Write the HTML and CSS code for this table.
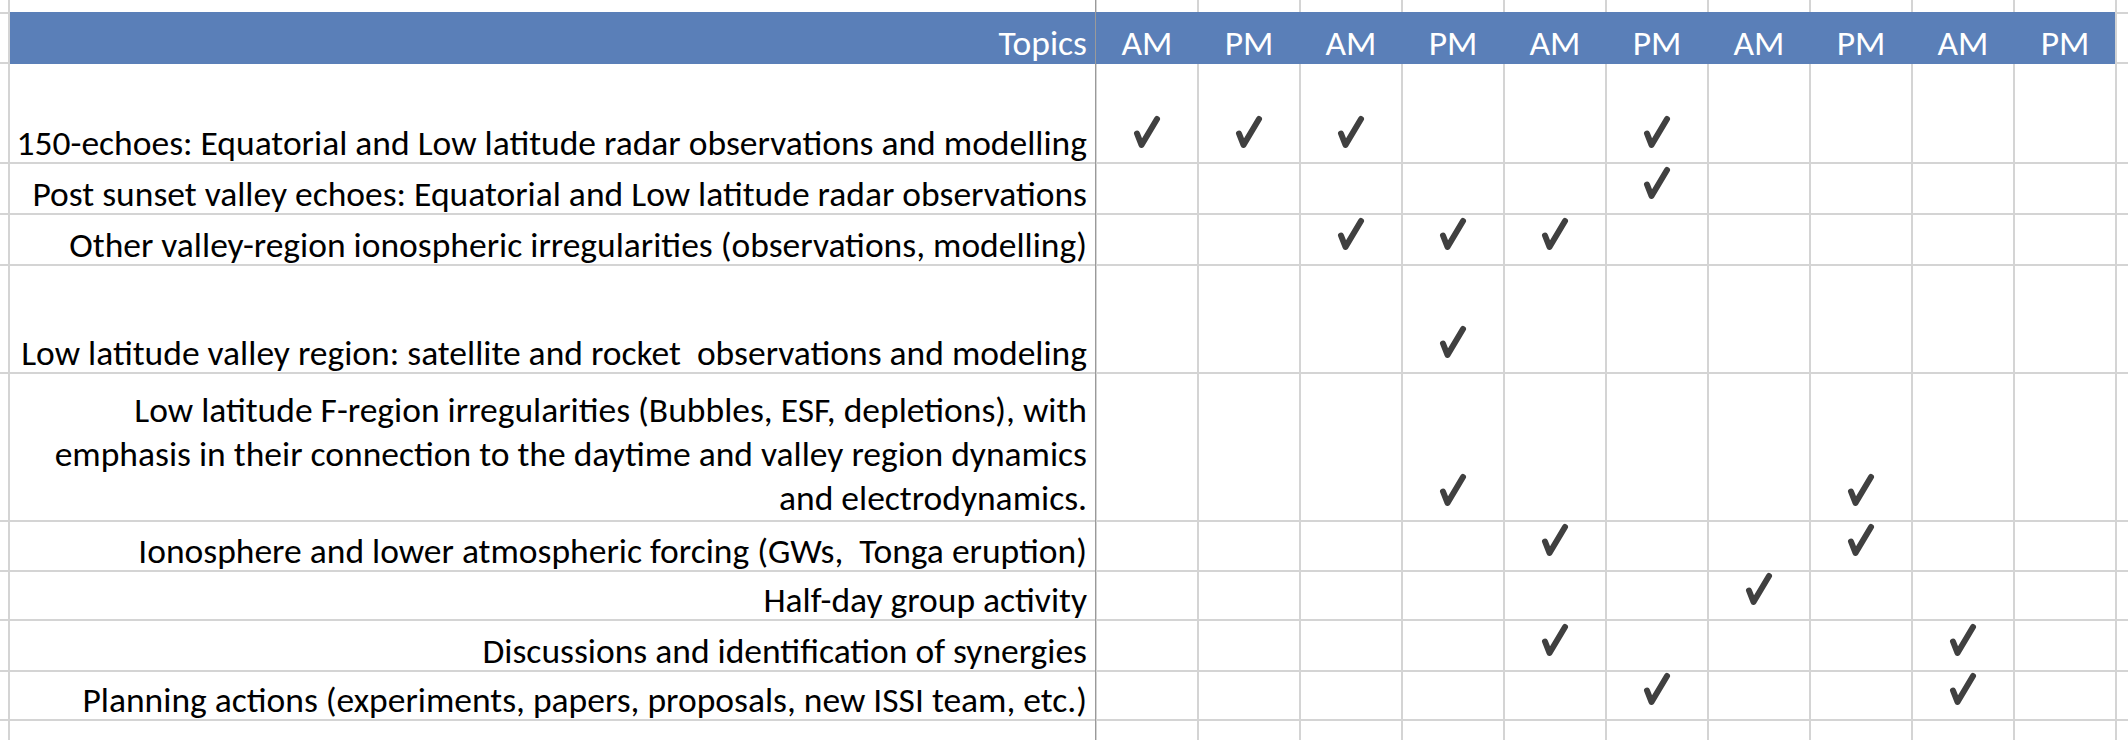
FILE: index.html
```html
<!DOCTYPE html>
<html lang="en">
<head>
<meta charset="utf-8">
<title>Workshop topics schedule</title>
<link rel="stylesheet" href="styles.css">
</head>
<body>
<svg class="defs" width="0" height="0" aria-hidden="true">
  <symbol id="tick" viewBox="0 0 40 36">
    <path d="M10 19.5 L14.5 31 L30 5" fill="none" stroke="currentColor" stroke-width="6" stroke-linecap="round" stroke-linejoin="round"/>
  </symbol>
</svg>

<div class="sheet">
  <div class="freeze"></div>

  <div class="row">
    <div class="m"></div><div class="t"></div>
    <div class="d"></div><div class="d"></div><div class="d"></div><div class="d"></div><div class="d"></div>
    <div class="d"></div><div class="d"></div><div class="d"></div><div class="d"></div><div class="d"></div>
    <div class="e"></div>
  </div>

  <div class="row">
    <div class="m"></div>
    <div class="hdr">
      <div class="ht">Topics</div>
      <div class="hd">AM</div><div class="hd">PM</div>
      <div class="hd">AM</div><div class="hd">PM</div>
      <div class="hd">AM</div><div class="hd">PM</div>
      <div class="hd">AM</div><div class="hd">PM</div>
      <div class="hd">AM</div><div class="hd">PM</div>
    </div>
    <div class="e"></div>
  </div>

  <div class="row">
    <div class="m"></div>
    <div class="t">150-echoes: Equatorial and Low latitude radar observations and modelling</div>
    <div class="d"><svg class="tick"><use href="#tick"/></svg></div>
    <div class="d"><svg class="tick"><use href="#tick"/></svg></div>
    <div class="d"><svg class="tick"><use href="#tick"/></svg></div>
    <div class="d"></div><div class="d"></div>
    <div class="d"><svg class="tick"><use href="#tick"/></svg></div>
    <div class="d"></div><div class="d"></div><div class="d"></div><div class="d"></div>
    <div class="e"></div>
  </div>

  <div class="row">
    <div class="m"></div>
    <div class="t">Post sunset valley echoes: Equatorial and Low latitude radar observations</div>
    <div class="d"></div><div class="d"></div><div class="d"></div><div class="d"></div><div class="d"></div>
    <div class="d"><svg class="tick"><use href="#tick"/></svg></div>
    <div class="d"></div><div class="d"></div><div class="d"></div><div class="d"></div>
    <div class="e"></div>
  </div>

  <div class="row">
    <div class="m"></div>
    <div class="t">Other valley-region ionospheric irregularities (observations, modelling)</div>
    <div class="d"></div><div class="d"></div>
    <div class="d"><svg class="tick"><use href="#tick"/></svg></div>
    <div class="d"><svg class="tick"><use href="#tick"/></svg></div>
    <div class="d"><svg class="tick"><use href="#tick"/></svg></div>
    <div class="d"></div><div class="d"></div><div class="d"></div><div class="d"></div><div class="d"></div>
    <div class="e"></div>
  </div>

  <div class="row">
    <div class="m"></div>
    <div class="t">Low latitude valley region: satellite and rocket&nbsp; observations and modeling</div>
    <div class="d"></div><div class="d"></div><div class="d"></div>
    <div class="d"><svg class="tick"><use href="#tick"/></svg></div>
    <div class="d"></div><div class="d"></div><div class="d"></div><div class="d"></div><div class="d"></div><div class="d"></div>
    <div class="e"></div>
  </div>

  <div class="row">
    <div class="m"></div>
    <div class="t wrap">Low latitude F-region irregularities (Bubbles, ESF, depletions), with<br>emphasis in their connection to the daytime and valley region dynamics<br>and electrodynamics.</div>
    <div class="d"></div><div class="d"></div><div class="d"></div>
    <div class="d"><svg class="tick"><use href="#tick"/></svg></div>
    <div class="d"></div><div class="d"></div><div class="d"></div>
    <div class="d"><svg class="tick"><use href="#tick"/></svg></div>
    <div class="d"></div><div class="d"></div>
    <div class="e"></div>
  </div>

  <div class="row">
    <div class="m"></div>
    <div class="t">Ionosphere and lower atmospheric forcing (GWs,&nbsp; Tonga eruption)</div>
    <div class="d"></div><div class="d"></div><div class="d"></div><div class="d"></div>
    <div class="d"><svg class="tick"><use href="#tick"/></svg></div>
    <div class="d"></div><div class="d"></div>
    <div class="d"><svg class="tick"><use href="#tick"/></svg></div>
    <div class="d"></div><div class="d"></div>
    <div class="e"></div>
  </div>

  <div class="row">
    <div class="m"></div>
    <div class="t">Half-day group activity</div>
    <div class="d"></div><div class="d"></div><div class="d"></div><div class="d"></div><div class="d"></div><div class="d"></div>
    <div class="d"><svg class="tick"><use href="#tick"/></svg></div>
    <div class="d"></div><div class="d"></div><div class="d"></div>
    <div class="e"></div>
  </div>

  <div class="row">
    <div class="m"></div>
    <div class="t">Discussions and identification of synergies</div>
    <div class="d"></div><div class="d"></div><div class="d"></div><div class="d"></div>
    <div class="d"><svg class="tick"><use href="#tick"/></svg></div>
    <div class="d"></div><div class="d"></div><div class="d"></div>
    <div class="d"><svg class="tick"><use href="#tick"/></svg></div>
    <div class="d"></div>
    <div class="e"></div>
  </div>

  <div class="row">
    <div class="m"></div>
    <div class="t">Planning actions (experiments, papers, proposals, new ISSI team, etc.)</div>
    <div class="d"></div><div class="d"></div><div class="d"></div><div class="d"></div><div class="d"></div>
    <div class="d"><svg class="tick"><use href="#tick"/></svg></div>
    <div class="d"></div><div class="d"></div>
    <div class="d"><svg class="tick"><use href="#tick"/></svg></div>
    <div class="d"></div>
    <div class="e"></div>
  </div>

  <div class="row">
    <div class="m"></div><div class="t"></div>
    <div class="d"></div><div class="d"></div><div class="d"></div><div class="d"></div><div class="d"></div>
    <div class="d"></div><div class="d"></div><div class="d"></div><div class="d"></div><div class="d"></div>
    <div class="e"></div>
  </div>
</div>
</body>
</html>
```

FILE: styles.css
```css
html, body {
  margin: 0;
  padding: 0;
  overflow: hidden;
  background: #ffffff;
}

body {
  font-family: Carlito, Calibri, "Liberation Sans Narrow", "Open Sans", sans-serif;
  font-size: 35.5px;
  color: #000000;
}

.defs {
  position: absolute;
  width: 0;
  height: 0;
}

.sheet {
  position: relative;
  display: grid;
  grid-template-columns: 8px 1085px repeat(10, 100px) 1fr;
  grid-template-rows: 12px 48px 98px 49px 49px 106px 146px 48px 47px 49px 47px 19px;
  gap: 2px;
  background: #d4d4d4;
  width: 2128px;
  height: 740px;
}

.row {
  display: contents;
}

.m, .t, .d, .e {
  background: #ffffff;
}

.t {
  display: flex;
  align-items: flex-end;
  justify-content: flex-end;
  padding: 0 8px 0 0;
  line-height: 38px;
  white-space: nowrap;
  text-align: right;
}

.t.wrap {
  line-height: 44px;
}

.d {
  display: flex;
  align-items: flex-end;
  justify-content: center;
  padding-bottom: 12px;
  color: #404040;
}

.tick {
  width: 40px;
  height: 36px;
  display: block;
}

.hdr {
  grid-column: 2 / 13;
  margin: -2px 0;
  background: #5a7fb8;
  color: #ffffff;
  display: grid;
  grid-template-columns: 1085px repeat(10, 100px);
  column-gap: 2px;
  align-items: end;
  line-height: 38px;
  padding-bottom: 2px;
}

.ht {
  text-align: right;
  padding-right: 8px;
}

.hd {
  text-align: center;
}

.freeze {
  position: absolute;
  left: 1095px;
  top: 0;
  bottom: 0;
  width: 1px;
  background: #9a9a9a;
  z-index: 2;
}
```
